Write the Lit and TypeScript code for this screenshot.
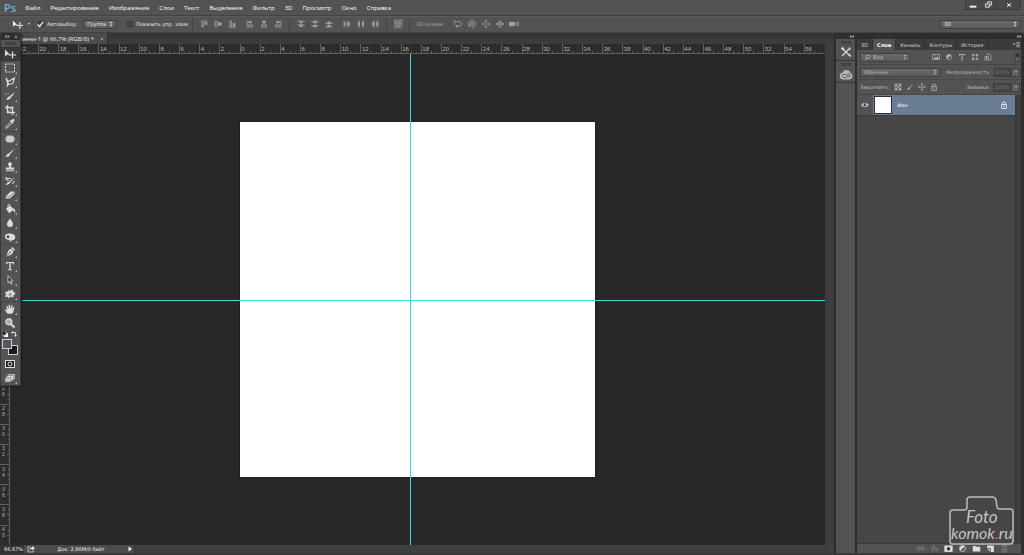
import { LitElement, html, svg, css } from "lit";
import { customElement } from "lit/decorators.js";

const MENUS = ["Файл", "Редактирование", "Изображение", "Слои", "Текст", "Выделение", "Фильтр", "3D", "Просмотр", "Окно", "Справка"];

const ICONS: Record<string, unknown> = {
  move: svg`<path d="M1 1.500v7l2-1.800h3z" fill="currentColor"/><path d="M8.500 4v6M5.500 7h6" stroke="currentColor"/><path d="M8.500 3.200l1.200 1.400H7.300zM8.500 10.800l1.200-1.400H7.300zM4.900 7l1.300-1.200v2.400zM12 7l-1.300-1.200v2.400z" fill="currentColor"/>`,
  marquee: svg`<rect x="1.500" y="2" width="9" height="8" fill="none" stroke="currentColor" stroke-dasharray="2 1"/>`,
  lasso: svg`<path d="M2 2l2.300 3.500L10.500 2 8.800 7.800 4 8.200zM4 8.200l-1.200 2.500" fill="none" stroke="currentColor" stroke-width="1.100"/><circle cx="4" cy="8" r="1.200" fill="currentColor"/>`,
  quick: svg`<path d="M11 2L7.500 7 6 5.700z" fill="currentColor"/><path d="M7.300 6.500c-.3 2.800-3 3.500-5.500 3 1.500-.7 1.700-3 4-3.300z" fill="currentColor"/><path d="M5 3.800a2.500 2.500 0 0 0-4 2.400" fill="none" stroke="currentColor" stroke-width=".8" stroke-dasharray="1 .8"/>`,
  crop: svg`<path d="M3.500 1v7.500H11M1 3.500h7.500V11" fill="none" stroke="currentColor" stroke-width="1.300"/><path d="M9.800 2.200L4 8" stroke="currentColor" stroke-width=".6"/>`,
  dropper: svg`<path d="M7 2.800l1.700-1.600c1-.8 2.500.5 1.600 1.600L8.900 4.500l.4.600-.8.800-2.900-2.800.8-.8z" fill="currentColor"/><path d="M6.400 4.400L2.300 8.500l-.5 1.700 1.700-.5 4.100-4.100" fill="none" stroke="currentColor" stroke-width=".9"/>`,
  patch: svg`<rect x="1.500" y="3" width="9" height="6" rx="2.500" fill="#b8b8b8"/><path d="M4 2.300v7.400M6 2v8M8 2.300v7.400" stroke="currentColor" stroke-width=".9"/><path d="M1.500 5h9M1.500 7h9" stroke="currentColor" stroke-width=".6"/>`,
  brush: svg`<path d="M10.800 1.200L6.200 7.300 5 6.200z" fill="currentColor"/><path d="M4.700 6.300l1.400 1.300C5.500 9.800 3.300 10.200 1 9.600c1.700-.5 1.700-2.800 3.700-3.300z" fill="currentColor"/>`,
  stamp: svg`<path d="M6 1.300a1.900 1.900 0 0 1 1.400 3.200c-.6.700-.5 1.500-.4 2h3.200v2H1.800v-2H5c.1-.5.200-1.300-.4-2A1.900 1.900 0 0 1 6 1.300zM1.800 9.300h8.400v1H1.800z" fill="currentColor"/>`,
  history: svg`<path d="M10.800 2L6.400 7.200l-1-.9z" fill="currentColor"/><path d="M5 6.400l1.200 1.200C5.500 9.500 3.500 10 1.300 9.500 3 9 3.300 6.900 5 6.400z" fill="currentColor"/><path d="M2 3.500h5M2.500 5.300h2.200M8 8.500c1.500 0 2-1 2-2.500" fill="none" stroke="currentColor"/><path d="M1 3.500l2-1.700v3.400z" fill="currentColor"/>`,
  eraser: svg`<path d="M6.800 2.500h3.400l.8 1.700-5 5.200H2.200L1.200 7.700z" fill="currentColor"/><path d="M1.400 7.600h3.900L10.700 3M5.300 7.600l.7 1.500" fill="none" stroke="#535353" stroke-width=".6"/>`,
  bucket: svg`<path d="M2 5.700L6 2.500l3.800 4-4.600 3.800z" fill="currentColor"/><path d="M4 5V2.300c0-1.400 2-1.400 2 0v3" fill="none" stroke="currentColor" stroke-width=".8"/><path d="M9.500 5.200c1.800.6 2 3 1.500 4.800-.8-1-1.300-2.500-2.800-3z" fill="currentColor"/>`,
  blur: svg`<path d="M6 1.500c1.200 2 3 3.600 3 5.600a3 3 0 0 1-6 0c0-2 1.800-3.600 3-5.600z" fill="currentColor"/>`,
  dodge: svg`<path d="M5 2.500c4 0 6.300 1.500 6.300 3.700S9.500 9.500 7.500 9.300L7 10.400H5.600l.2-1.600C3 9.200 1 8 1 5.800S2.700 2.500 5 2.500z" fill="currentColor"/><circle cx="4" cy="5.700" r="1.300" fill="#333"/>`,
  pen: svg`<path d="M8.300 1l2.700 2.700-1.300 1L7.200 2.200zM6.800 2.700l2.500 2.500c-.5 2.800-2.500 4-6.800 5.200C3.500 6.200 4.200 3.600 6.800 2.700z" fill="currentColor"/><path d="M2.700 10.100l3-3.200" stroke="#444" stroke-width=".7"/><circle cx="6.100" cy="6.300" r=".8" fill="#444"/>`,
  type: svg`<path d="M2 2h8v2.300h-.8C9 3.200 8.700 2.900 6.700 2.900v6.300l1.300.3v.7H4v-.7l1.300-.3V2.900c-2 0-2.300.3-2.500 1.400H2z" fill="currentColor"/>`,
  path: svg`<path d="M4 1.500v7.300l1.700-1.500 1.300 3 1-.5-1.300-2.900h2.200z" fill="#2b2b2b" stroke="currentColor" stroke-width=".8"/>`,
  shape: svg`<path d="M6 3.500C7.500.8 10 1.500 9 4c3 .2 3 2.500.5 3 .8 2.500-1.500 3-2.700 1.300C5.500 10.500 4 10 3.700 8.500 1 10 .3 8 2.500 6.500 0 5 1.500 3 3.500 4 3.500 1.800 5.300 1.500 6 3.500z" fill="currentColor"/><path d="M4.500 7.500l3.500-2M5.200 4.800l1.600 2.800" stroke="#555" stroke-width=".7"/>`,
  hand: svg`<path d="M3.600 10.800L1 7.200c-.4-.8.500-1.200 1.100-.6l1.100 1-.8-4.200c-.1-.9.900-1 1.200-.2l.9 2.600.2-3.700c0-.9 1.200-.9 1.300 0l.3 3.600L7.500 2.500c.3-.8 1.300-.5 1.200.3l-.5 3.500 1.200-2c.5-.7 1.300-.2 1 .5-.9 2.600-1 4.400-2.200 6z" fill="currentColor"/>`,
  zoom: svg`<circle cx="4.800" cy="4.800" r="3" fill="#a8b0b3" stroke="currentColor" stroke-width="1.200"/><path d="M7.200 7.200l3.300 3.300" stroke="currentColor" stroke-width="2"/>`,
  mask: svg`<rect x="1.500" y="2.500" width="9" height="7" fill="#222" stroke="currentColor"/><circle cx="6" cy="6" r="2" fill="none" stroke="currentColor"/>`,
  screen: svg`<rect x="4" y="2" width="7" height="5" fill="#b5b5b5"/><rect x="2.500" y="3.500" width="7" height="5" fill="#ddd" stroke="#666" stroke-width=".5"/><rect x="1" y="5.500" width="6" height="4.500" fill="#c5c5c5" stroke="#666" stroke-width=".5"/>`,
  a1: svg`<path d="M2 2.500h8" stroke="currentColor"/><path d="M3.500 4v5.500h2V4z" fill="none" stroke="currentColor"/><path d="M7 4h3v3H7z" fill="currentColor"/>`,
  a2: svg`<path d="M1 6h10" stroke="currentColor" stroke-width=".8"/><rect x="2.500" y="3" width="2.500" height="6" fill="#535353" stroke="currentColor"/><path d="M6.500 4h3.500v4H6.500z" fill="currentColor"/>`,
  a3: svg`<path d="M2 10h8" stroke="currentColor"/><path d="M3.500 2.500v6h2v-6z" fill="none" stroke="currentColor"/><path d="M7 5h3v4H7z" fill="currentColor"/>`,
  a4: svg`<path d="M2.500 2v8" stroke="currentColor"/><path d="M4 2.500h4V5H4z" fill="currentColor"/><path d="M4 7h5.500v2.500H4z" fill="none" stroke="currentColor"/>`,
  a5: svg`<path d="M6 1.500v9" stroke="currentColor" stroke-width=".8"/><path d="M4 2.500h4V5H4z" fill="currentColor"/><path d="M3 7h6v2.500H3z" fill="#535353" stroke="currentColor"/>`,
  a6: svg`<path d="M9.500 2v8" stroke="currentColor"/><path d="M4 2.500h4V5H4z" fill="currentColor"/><path d="M2.500 7H8v2.500H2.500z" fill="none" stroke="currentColor"/>`,
  d1: svg`<path d="M1.500 2.500h9M1.500 7h9" stroke="currentColor"/><path d="M4 3h4v2H4zM4 7h4v2.500H4z" fill="currentColor"/>`,
  d2: svg`<path d="M1.500 3.500h9M1.500 8h9" stroke="currentColor"/><path d="M4 2h4v3H4zM4 6.800h4v3H4z" fill="currentColor"/>`,
  d3: svg`<path d="M1.500 5.500h9M1.500 9.500h9" stroke="currentColor"/><path d="M4 3h4v2.500H4zM4 7h4v2.500H4z" fill="currentColor"/>`,
  d4: svg`<path d="M2.500 1.500v9M7 1.500v9" stroke="currentColor"/><path d="M3 4h2v4H3zM7 4h2.500v4H7z" fill="currentColor"/>`,
  d5: svg`<path d="M3.500 1.500v9M8.500 1.500v9" stroke="currentColor"/><path d="M2.300 4h2.500v4H2.300zM7.300 4h2.500v4H7.300z" fill="currentColor"/>`,
  d6: svg`<path d="M5 1.500v9M9.500 1.500v9" stroke="currentColor"/><path d="M2.500 4H5v4H2.500zM7 4h2.500v4H7z" fill="currentColor"/>`,
  auto: svg`<path d="M2 2.500h3v3H2zM7.500 2.500h3v3h-3zM2 7h3v3.500H2zM7.500 7h3v3.500h-3z" fill="none" stroke="currentColor" stroke-width=".9"/><path d="M1 1.200h4.500M7 1.200h4.500M6.200 1.500v9" stroke="currentColor" stroke-width=".9"/>`,
  orbit: svg`<path d="M2.500 7.500C0 5.500 2.500 3 5.500 3s5.500 1.500 5 3.300S7 9 4.500 8.600" fill="none" stroke="currentColor"/><path d="M5.700 6.800v3.700L2.800 8.500z" fill="currentColor"/><path d="M1 1.500l2.500.5L2 4z" fill="currentColor"/>`,
  roll: svg`<path d="M3 9a4.200 4.200 0 1 1 3 1.300" fill="none" stroke="currentColor"/><circle cx="6" cy="6" r="1.800" fill="none" stroke="currentColor"/><path d="M1.500 8l3-.3-1 2.600z" fill="currentColor"/>`,
  pan: svg`<path d="M6 1l1.800 2H4.200zM6 11l1.800-2H4.200zM1 6l2-1.800v3.600zM11 6L9 4.200v3.600z" fill="currentColor"/><path d="M6 3v2M6 7v2M3 6h2M7 6h2" stroke="currentColor"/>`,
  slide: svg`<path d="M6 1.500l1.800 2.300H4.200zM6 10.800l1.800-2H4.200zM.8 6l3-2v4zM11.200 6l-3-2v4z" fill="currentColor"/><path d="M2 6h8M6 3v6" stroke="currentColor"/>`,
  camera: svg`<path d="M0 3.500h7v5H0z" fill="currentColor"/><path d="M7.500 6l4-2.500v5z" fill="none" stroke="currentColor"/>`,
  wrench: svg`<path d="M2 2l8 8M10 2L2 10" stroke="currentColor" stroke-width="1.300"/><path d="M.8 2.500L2.500.8l2 2L2.800 4.500zM9 7.500l2.300 2.300-1 1.200L8 8.500z" fill="currentColor"/><path d="M11 3.500L9.500 3V1.500" fill="none" stroke="currentColor"/>`,
  cloud: svg`<path d="M3.300 9.800a3 3 0 0 1-.3-5.900A3.800 3.800 0 0 1 10 4.300a2.900 2.900 0 0 1-.9 5.500z" fill="#b5b5b5"/><path d="M7 7.700c-2.500 1.500-4.500.3-4.200-1.300s3-1.200 4 .1 2.500 1.300 2.700 0S8 4.500 7 5.500" fill="none" stroke="#555" stroke-width=".8"/>`,
  image: svg`<rect x="1" y="2" width="10" height="8" fill="none" stroke="currentColor"/><path d="M2 9l2.500-3L6 7.500 8 5l2 4z" fill="currentColor"/><circle cx="4" cy="4" r=".8" fill="currentColor"/>`,
  adjust: svg`<circle cx="6" cy="6" r="4" fill="none" stroke="currentColor"/><path d="M3.200 8.800a4 4 0 0 1 5.600-5.600z" fill="currentColor"/>`,
  ttype: svg`<path d="M1.500 1.500h9V4h-1l-.5-1.200H6.700V10H8v.8H4V10h1.300V2.800H3L2.500 4h-1z" fill="currentColor"/>`,
  vshape: svg`<path d="M3 2v8M9 2v8M3 3h6M3 9h6" stroke="currentColor" stroke-width=".9"/><path d="M1.500 1.500h2.500V4H1.500zM8 1.500h2.500V4H8zM1.500 8H4v2.500H1.500zM8 8h2.500v2.500H8z" fill="currentColor"/>`,
  smart: svg`<path d="M4.500 4V1.500h4L10.500 4v6.500H7" fill="none" stroke="currentColor"/><rect x="1.500" y="5" width="5" height="5.500" fill="#535353" stroke="currentColor"/><path d="M3 6.500h2V9H3z" fill="currentColor"/>`,
  checker: svg`<rect x="1.500" y="1.500" width="9" height="9" fill="none" stroke="currentColor"/><path d="M2 2h2.700v2.700H2zM7.300 2H10v2.700H7.300zM4.700 4.700h2.600v2.600H4.700zM2 7.300h2.700V10H2zM7.300 7.300H10V10H7.300z" fill="currentColor"/>`,
  cross: svg`<path d="M6 1.500v9M1.500 6h9" stroke="currentColor"/><path d="M6 0l1.800 2.200H4.200zM6 12l1.800-2.200H4.200zM0 6l2.200-1.800v3.600zM12 6L9.800 4.200v3.600z" fill="currentColor"/>`,
  lock: svg`<path d="M3.500 5.500V4a2.500 2.500 0 0 1 5 0v1.500" fill="none" stroke="currentColor" stroke-width="1.200"/><rect x="2.500" y="5.500" width="7" height="5.500" fill="none" stroke="currentColor" stroke-width="1.100"/><path d="M5.300 6.800h1.400v2.700H5.300z" fill="currentColor"/>`,
  eye: svg`<path d="M.5 6C2.500 2 9.500 2 11.500 6c-2 3.800-9 3.800-11 0z" fill="currentColor"/><circle cx="6" cy="5.700" r="2.300" fill="#333"/><circle cx="6.700" cy="5" r=".8" fill="currentColor"/>`,
  link: svg`<path d="M5 4H3a2 2 0 0 0 0 4h2M7 4h2a2 2 0 0 1 0 4H7M4 6h4" fill="none" stroke="currentColor" stroke-width="1.100"/>`,
  fx: svg`<path d="M6.300 1.800C4.500 1 4.300 3 4 5L3.300 9c-.3 1.600-1 2-2 1.500M2.500 4.500h3.500M6.500 5.300c1-1 1.600.2 1.900 1.700S9.200 9.500 10.500 8.500M10.500 5L6.200 9" fill="none" stroke="currentColor" stroke-width="1"/>`,
  addmask: svg`<rect x=".5" y="2" width="11" height="8.500" fill="currentColor"/><circle cx="6" cy="6.200" r="2.300" fill="#333"/>`,
  folder: svg`<path d="M1 2.500h4l1 1.300h5v6.200H1z" fill="currentColor"/>`,
  page: svg`<path d="M1.500 2h9v8.500H6L1.500 6z" fill="currentColor"/><path d="M1.500 6H6v4.500" fill="none" stroke="#444"/>`,
  trash: svg`<path d="M2 3h8M4.500 3V1.500h3V3M3 4.500v6h6v-6M5 5v4.500M7 5v4.500" fill="none" stroke="currentColor" stroke-width=".9"/>`,
  share: svg`<path d="M4.500 2.500h-3v8h8V8" fill="none" stroke="currentColor"/><path d="M4 8c0-3 1.500-4.500 4-4.500V1.500L11.800 5 8 8V6C6 6 5 6.500 4 8z" fill="currentColor"/>`,
  search: svg`<circle cx="7" cy="4.800" r="3" fill="none" stroke="currentColor" stroke-width="1.200"/><path d="M5 7l-3.500 3.500" stroke="currentColor" stroke-width="1.500"/>`,
  updown: svg`<path d="M6 1l2.700 3.500H3.300zM6 11l2.700-3.500H3.300z" fill="currentColor"/>`,
  down: svg`<path d="M2 4h8L6 8.500z" fill="currentColor"/>`,
  right: svg`<path d="M3 1l7 5-7 5z" fill="currentColor"/>`,
  left2: svg`<path d="M5.500 2.500v7L1 6zM11 2.500v7L6.500 6z" fill="currentColor"/>`,
  right2: svg`<path d="M1 2.500v7L5.500 6zM6.500 2.500v7L11 6z" fill="currentColor"/>`,
  close: svg`<path d="M2 2.500l8 7M10 2.500l-8 7" stroke="currentColor" stroke-width="2"/>`,
  min: svg`<path d="M1 7h10v3H1z" fill="currentColor"/>`,
  restore: svg`<path d="M4.500 4V1.500h6.500v5.500H8M1 5h6.500v5.500H1z" fill="none" stroke="currentColor" stroke-width="1.600"/>`,
  tick: svg`<path d="M1.500 6l3 3.500 6-8" fill="none" stroke="#fff" stroke-width="2"/>`,
  flyout: svg`<path d="M0 4h4L2 7z" fill="currentColor"/><path d="M5.500 2.500H12M5.500 5H12M5.500 7.500H12M5.500 10H12" stroke="currentColor"/>`,
};

const icon = (name: string, size = 10) =>
  html`<svg class="icon" viewBox="0 0 12 12" width=${size} height=${size} aria-hidden="true">${ICONS[name]}</svg>`;

@customElement("ps-ruler")
export class PsRuler extends LitElement {
  static properties = { vertical: { type: Boolean } };
  declare vertical: boolean;
  static styles = css`
    :host { display: block; overflow: hidden; background: #2c2c2c; }
    svg { display: block; width: 100%; height: 100%; }
    text { font: 6px "Liberation Sans", sans-serif; fill: #b4b4b4; }
    .small { font-size: 5px; }
    .tick { stroke: #606060; stroke-width: 1; shape-rendering: crispEdges; }
  `;
  render() {
    const step = 20.15;
    const marks = [];
    if (this.vertical) {
      for (let n = 13; n <= 20; n++) {
        const y = 68 + n * step;
        marks.push(svg`<line class="tick" x1="0" x2="10" y1=${y} y2=${y}></line>`);
        for (let q = 1; q < 4; q++) {
          const yq = y + (q * step) / 4;
          marks.push(svg`<line class="tick" x1=${q === 2 ? 7 : 8} x2="10" y1=${yq} y2=${yq}></line>`);
        }
        String(n * 2).split("").forEach((d, i) => marks.push(svg`<text class="small" x="2" y=${y + 6 + i * 6}>${d}</text>`));
      }
      marks.push(svg`<line class="tick" x1="9.500" x2="9.500" y1="0" y2="2000"></line>`);
    } else {
      for (let n = -11; n <= 28; n++) {
        const x = 240 + n * step;
        marks.push(svg`<line class="tick" x1=${x} x2=${x} y1="0" y2="10"></line>`);
        for (let q = 1; q < 4; q++) {
          const xq = x + (q * step) / 4;
          marks.push(svg`<line class="tick" x1=${xq} x2=${xq} y1=${q === 2 ? 7 : 8} y2="10"></line>`);
        }
        marks.push(svg`<text x=${x + 1} y="7">${Math.abs(n * 2)}</text>`);
      }
      marks.push(svg`<line class="tick" x1="0" x2="3000" y1="9.500" y2="9.500"></line>`);
    }
    return html`<svg aria-hidden="true">${marks}</svg>`;
  }
}

@customElement("app-root")
export class AppRoot extends LitElement {
  static styles = css`
    :host { display: block; height: 100vh; font: 5px/8px "DejaVu Sans", sans-serif; color: #ececec; }
    * { box-sizing: border-box; }
    button, select, input { font: inherit; color: inherit; margin: 0; padding: 0; border: 0; border-radius: 0; background: none; appearance: none; outline: none; min-width: 0; }
    button { display: flex; align-items: center; justify-content: center; }
    .icon { display: block; flex: none; }
    .shell { position: relative; height: 100%; }
    .app { display: flex; flex-direction: column; height: 100%; background: #282828; overflow: hidden; }

    .menubar { display: flex; align-items: center; flex: none; height: 15px; background: #535353; }
    .logo { width: 20px; padding-left: 4px; font: 600 11px/14px "Open Sans", sans-serif; color: #6fb0e6; }
    .menu { padding: 0 5px; font: 6px/12px "Open Sans", sans-serif; color: #fff; white-space: nowrap; }
    .grow { flex: 1; }
    .winbtns { display: flex; align-self: flex-start; height: 10px; margin-right: 3px; gap: 1px; }
    .winbtns button { width: 15px; background: #494949; border: 1px solid #3e3e3e; border-top: 0; color: #eee; }
    .winbtns .wide { width: 24px; }

    .options { display: flex; align-items: center; flex: none; height: 18px; background: #535353; border-top: 1px solid #434343; border-bottom: 1px solid #434343; box-shadow: inset 0 1px #5b5b5b; }
    .group { display: flex; align-items: center; gap: 8px; padding: 0 6px; border-right: 1px solid #434343; height: 13px; color: #a2a2a2; }
    .group.last { border: 0; }
    .icons { display: flex; gap: 4px; }
    .current { display: flex; align-items: center; gap: 4px; width: 34px; padding-left: 12px; height: 13px; border-right: 1px solid #434343; }
    .check { display: flex; align-items: center; gap: 3px; white-space: nowrap; }
    .box { display: grid; width: 7px; height: 7px; }
    .box > * { grid-area: 1 / 1; place-self: center; pointer-events: none; }
    .box input { width: 6px; height: 6px; background: #454545; border: 1px solid #3a3a3a; pointer-events: auto; }
    .box .icon { visibility: hidden; }
    .box input:checked + .icon { visibility: visible; }
    .sel { display: grid; align-items: center; height: 9px; background: linear-gradient(#6a6a6a, #5c5c5c); border: 1px solid #404040; }
    .sel > * { grid-area: 1 / 1; }
    .sel select { width: 100%; height: 7px; padding-left: 3px; line-height: 7px; }
    .sel .icon { justify-self: end; margin-right: 1px; pointer-events: none; }
    .sel .lead { justify-self: start; margin-left: 3px; }
    .s-auto { margin-left: 3px; }
    .s-group { width: 33px; margin-left: 6px; }
    .s-space { width: 80px; margin-right: 4px; }
    .showctl { height: 13px; margin-left: 10px; padding-right: 3px; border-right: 1px solid #434343; }

    .main { display: flex; flex: 1; min-height: 0; }
    .workspace { position: relative; display: flex; flex-direction: column; flex: 1; min-width: 0; border-right: 1px solid #2c2c2c; }
    .tabs { display: flex; flex: none; height: 11px; background: linear-gradient(#343434, #3e3e3e); }
    .tab { display: flex; align-items: center; justify-content: flex-end; width: 108px; background: #4b4b4b; border-right: 1px solid #2e2e2e; font: 6px/8px "Open Sans", sans-serif; white-space: nowrap; }
    .tab button { width: 8px; margin: 0 1px 0 4px; color: #b5b5b5; }
    .viewrow { display: flex; flex: 1; min-height: 0; }
    .view { display: flex; flex-direction: column; flex: 1; min-width: 0; }
    .hruler { flex: none; height: 10px; }
    .stage { position: relative; display: flex; flex: 1; min-height: 0; }
    .vruler { width: 10px; }
    .vscroll { width: 9px; background: #3d3d3d; }
    .doc { position: absolute; left: 240px; top: 68px; width: 355px; height: 355px; background: #fff; box-shadow: 0 0 2px #111; }
    .guide-v { position: absolute; left: 410px; top: 0; bottom: 0; width: 1px; background: #35dcdc; }
    .guide-h { position: absolute; left: 0; right: 0; top: 246px; height: 1px; background: #35dcdc; }
    .status { display: flex; align-items: center; flex: none; height: 10px; background: #3f3f3f; border-bottom: 2px solid #363b36; }
    .status input { width: 24px; padding-left: 4px; line-height: 8px; height: 8px; background: #333; }
    .status .info { display: flex; align-items: center; justify-content: space-between; width: 111px; height: 8px; padding: 0 1px 0 3px; background: #4b4b4b; border-right: 1px solid #333; white-space: nowrap; }

    .toolbox { position: absolute; left: 0; top: 0; width: 21px; background: #535353; border: 1px solid #383838; border-top: 0; box-shadow: 1px 1px 2px #1c1c1c; }
    .boxhead { display: flex; justify-content: space-between; align-items: center; height: 7px; padding: 0 2px 0 4px; background: #2f2f2f; color: #bbb; }
    .grip { height: 3px; margin: 2px 4px; border: solid #3c3c3c; border-width: 1px 0; background: #484848; }
    .tool { width: 19px; height: 14px; color: #dcdcdc; }
    .tool.on { background: #3a3a3a; box-shadow: inset 0 0 0 1px #303030; }
    .tool::after { content: ""; margin: 10px 0 0 -1px; border: 1px solid transparent; border-right-color: #bbb; border-bottom-color: #bbb; }
    .tool.plain::after { border-color: transparent; }
    .sep { height: 1px; background: #474747; }
    .mini { display: flex; justify-content: space-between; height: 8px; padding: 1px 3px 0 1px; }
    .swatches { display: grid; width: 16px; height: 16px; margin: 1px 0 2px 1px; }
    .swatches span { grid-area: 1 / 1; width: 10px; height: 10px; border: 1px solid #cfcfcf; }
    .fg { z-index: 1; background: #55565e; }
    .bg { place-self: end; background: #1b1b1b; }

    .side { display: flex; flex-direction: column; background: #2e2e2e; }
    .sidehead { display: flex; flex: none; justify-content: flex-end; align-items: center; height: 6px; padding-right: 2px; color: #bbb; }
    .dock { width: 21px; border-bottom: 2px solid #363b36; }
    .dockbody { flex: 1; margin: 0 1px; background: #535353; }
    .dockitem { display: flex; flex-direction: column; align-items: center; height: 22px; border-bottom: 1px solid #383838; }
    .dockitem .grip { width: 10px; margin: 2px 0; }
    .dockitem button { color: #d8d8d8; }
    .panel { width: 168px; padding-left: 1px; border-bottom: 2px solid #363b36; }
    .ptabs { display: flex; flex: none; height: 11px; margin-right: 3px; background: #3b3b3b; color: #d2d2d2; }
    .ptabs button { padding: 0 4px; border-right: 1px solid #303030; }
    .ptabs button.on { background: #535353; color: #fff; font-weight: 700; }
    .ptabs .fly { border: 0; padding: 0 1px; }
    .pbody { display: flex; flex-direction: column; flex: 1; min-height: 0; margin-right: 3px; background: #464646; }
    .prow { display: flex; align-items: center; flex: none; height: 15px; padding: 0 1px 0 3px; background: #535353; border-bottom: 1px solid #474747; color: #bcbcbc; white-space: nowrap; gap: 3px; }
    .prow input { width: 18px; height: 9px; line-height: 7px; text-align: right; background: #464646; border: 1px solid #3c3c3c; color: #727272; padding-right: 1px; }
    .prow .drop { width: 9px; height: 9px; margin-left: -3px; background: #606060; border: 1px solid #404040; }
    .s-kind { width: 50px; }
    .s-kind select { padding-left: 12px; }
    .s-blend { width: 83px; }
    .filters { display: flex; gap: 5px; color: #b4b4b4; }
    .filters.lock { gap: 4px; margin-left: 1px; }
    .switch { width: 5px; height: 9px; margin-left: 20px; background: linear-gradient(#333 40%, #5d5d5d 40%); border: 1px solid #424242; }
    .layers { display: flex; flex: 1; min-height: 0; }
    .list { flex: 1; }
    .bar { width: 6px; background: #3e3e3e; border-left: 1px solid #383838; }
    .layer { display: flex; height: 21px; border-bottom: 1px solid #3b3b3b; background: #535353; }
    .layer > button { width: 16px; color: #d5d5d5; }
    .row { display: flex; flex: 1; align-items: center; gap: 5px; padding: 0 7px 0 1px; background: #6b7d95; color: #fff; font-style: italic; }
    .thumb { width: 18px; height: 18px; background: #fff; border: 1px solid #28323e; }
    .pfoot { display: flex; align-items: center; justify-content: flex-end; gap: 5px; flex: none; height: 10px; padding-right: 12px; background: #535353; border-top: 1px solid #3b3b3b; color: #dedede; }
    .dim { color: #8a8a8a; }
    .watermark { position: absolute; right: 9px; bottom: 7px; width: 68px; height: 53px; pointer-events: none; }
    .watermark text { font: italic 17px Lato, sans-serif; fill: #c4c4c4; }
    .watermark .small { font-size: 16px; }
    .watermark .dot { fill: #e2622a; }
  `;

  private tool(name: string, label: string, cls = "") {
    return html`<button class="tool ${cls}" aria-label=${label}>${icon(name, 12)}</button>`;
  }

  private tools(list: [string, string][]) {
    return list.map(([n, l]) => this.tool(n, l, n === "move" ? "on plain" : n === "zoom" ? "plain" : ""));
  }

  private icons(names: string[], size = 10) {
    return names.map((n) => html`<button aria-label=${n}>${icon(n, size)}</button>`);
  }

  render() {
    return html`
      <div class="shell">
      <div class="app">
        <nav class="menubar">
          <span class="logo">Ps</span>
          ${MENUS.map((m) => html`<button class="menu">${m}</button>`)}
          <span class="grow"></span>
          <div class="winbtns">
            <button aria-label="Свернуть">${icon("min", 8)}</button>
            <button aria-label="Восстановить">${icon("restore", 7)}</button>
            <button class="wide" aria-label="Закрыть">${icon("close", 6)}</button>
          </div>
        </nav>

        <div class="options">
          <div class="current">${icon("move", 11)}${icon("down", 4)}</div>
          <label class="check s-auto"><span class="box"><input type="checkbox" checked />${icon("tick", 7)}</span>Автовыбор:</label>
          <div class="sel s-group"><select aria-label="Автовыбор"><option>Группа</option></select>${icon("updown", 6)}</div>
          <label class="check showctl"><span class="box"><input type="checkbox" />${icon("tick", 7)}</span>Показать упр. элем.</label>
          <div class="group">
            <div class="icons">${this.icons(["a1", "a2", "a3"])}</div>
            <div class="icons">${this.icons(["a4", "a5", "a6"])}</div>
          </div>
          <div class="group">
            <div class="icons">${this.icons(["d1", "d2", "d3"])}</div>
            <div class="icons">${this.icons(["d4", "d5", "d6"])}</div>
          </div>
          <div class="group">${this.icons(["auto"])}</div>
          <div class="group last"><span>3D-режим:</span><div class="icons">${this.icons(["orbit", "roll", "pan", "slide", "camera"])}</div></div>
          <span class="grow"></span>
          <div class="sel s-space"><select aria-label="Рабочая среда"><option>3D</option></select>${icon("updown", 6)}</div>
        </div>

        <div class="main">
          <section class="workspace">
            <div class="tabs">
              <div class="tab"><span>Без имени-1 @ 66,7% (RGB/8) *</span><button aria-label="Закрыть вкладку">${icon("close", 4)}</button></div>
            </div>
            <div class="viewrow">
              <div class="view">
                <ps-ruler class="hruler"></ps-ruler>
                <div class="stage">
                  <ps-ruler class="vruler" vertical></ps-ruler>
                  <div class="doc"></div>
                  <div class="guide-h"></div>
                  <div class="guide-v"></div>
                </div>
              </div>
              <div class="vscroll"></div>
            </div>
            <div class="status">
              <input aria-label="Масштаб" value="66,67%" />
              <div class="info">${icon("share", 8)}<span>Док: 2,86M/0 байт</span><button aria-label="Меню состояния">${icon("right", 6)}</button></div>
            </div>
            <aside class="toolbox">
              <div class="boxhead">${icon("right2", 5)}${icon("close", 4)}</div>
              <div class="grip"></div>
              ${this.tools([["move", "Перемещение"], ["marquee", "Область"], ["lasso", "Лассо"], ["quick", "Быстрое выделение"], ["crop", "Рамка"], ["dropper", "Пипетка"]])}
              <div class="sep"></div>
              ${this.tools([["patch", "Заплатка"], ["brush", "Кисть"], ["stamp", "Штамп"], ["history", "Архивная кисть"], ["eraser", "Ластик"], ["bucket", "Заливка"], ["blur", "Размытие"], ["dodge", "Осветлитель"]])}
              <div class="sep"></div>
              ${this.tools([["pen", "Перо"], ["type", "Текст"], ["path", "Выделение контура"], ["shape", "Фигура"]])}
              <div class="sep"></div>
              ${this.tools([["hand", "Рука"], ["zoom", "Масштаб"]])}
              <div class="mini">
                <svg viewBox="0 0 6 6" width="6" height="6"><rect x="2" y="2" width="4" height="4" fill="#fff"/><rect width="4" height="4" fill="#222" stroke="#bbb" stroke-width=".6"/></svg>
                <svg viewBox="0 0 6 6" width="6" height="6"><path d="M1.500 1.500h3v3" fill="none" stroke="#ddd"/><path d="M0 1.500L2 0v3zM4.500 6L3 4h3z" fill="#ddd"/></svg>
              </div>
              <div class="swatches"><span class="fg"></span><span class="bg"></span></div>
              ${this.tool("mask", "Быстрая маска", "plain")}
              ${this.tool("screen", "Режим экрана")}
            </aside>
          </section>

          <aside class="side dock">
            <div class="sidehead">${icon("left2", 5)}</div>
            <div class="dockbody">
              <div class="dockitem"><div class="grip"></div><button aria-label="Наборы">${icon("wrench", 12)}</button></div>
              <div class="dockitem"><div class="grip"></div><button aria-label="Облако">${icon("cloud", 14)}</button></div>
            </div>
          </aside>

          <aside class="side panel">
            <div class="sidehead">${icon("right2", 5)}</div>
            <div class="ptabs">
              <button>3D</button><button class="on">Слои</button><button>Каналы</button><button>Контуры</button><button>История</button>
              <span class="grow"></span><button class="fly" aria-label="Меню панели">${icon("flyout", 7)}</button>
            </div>
            <div class="pbody">
              <div class="prow">
                <div class="sel s-kind"><select aria-label="Фильтр слоёв"><option>Вид</option></select><span class="lead">${icon("search", 7)}</span>${icon("updown", 6)}</div>
                <span class="grow"></span>
                <div class="filters">${this.icons(["image", "adjust", "ttype", "vshape", "smart"], 8)}</div>
                <button class="switch" aria-label="Фильтр вкл./выкл."></button>
              </div>
              <div class="prow">
                <div class="sel s-blend"><select aria-label="Режим наложения"><option>Обычные</option></select>${icon("updown", 6)}</div>
                <span class="grow"></span>
                <label for="opacity">Непрозрачность:</label><input id="opacity" value="100%" /><button class="drop" aria-label="Непрозрачность">${icon("down", 4)}</button>
              </div>
              <div class="prow">
                <span>Закрепить:</span>
                <div class="filters lock">${this.icons(["checker", "brush", "cross", "lock"], 8)}</div>
                <span class="grow"></span>
                <label for="fill">Заливка:</label><input id="fill" value="100%" /><button class="drop" aria-label="Заливка">${icon("down", 4)}</button>
              </div>
              <div class="layers">
                <div class="list">
                  <div class="layer">
                    <button aria-label="Видимость слоя">${icon("eye", 8)}</button>
                    <div class="row"><span class="thumb"></span><span>Фон</span><span class="grow"></span>${icon("lock", 8)}</div>
                  </div>
                </div>
                <div class="bar"></div>
              </div>
              <div class="pfoot">
                <span class="dim">${icon("link", 9)}</span><span class="dim">${icon("fx", 9)}</span>
                ${this.icons(["addmask", "adjust", "folder", "page"], 9)}<span class="dim">${icon("trash", 9)}</span>
              </div>
            </div>
          </aside>
        </div>
      </div>
      <svg class="watermark" viewBox="0 0 68 53" role="img" aria-label="Foto komok.ru">
        <path d="M6 15H17Q20 15 20 12V5Q20 2 23 2H45Q48 2 49 5L50 12Q50 14 53 14H63Q66 14 66 17V46Q66 49 63 49H5Q3 49 3 46V18Q3 15 6 15" fill="none" stroke="#bcbcbc" stroke-width="1.500"/>
        <text x="19" y="28">Foto</text>
        <text class="small" x="4" y="44">komok<tspan class="dot">.</tspan>ru</text>
      </svg>
      </div>
    `;
  }
}
